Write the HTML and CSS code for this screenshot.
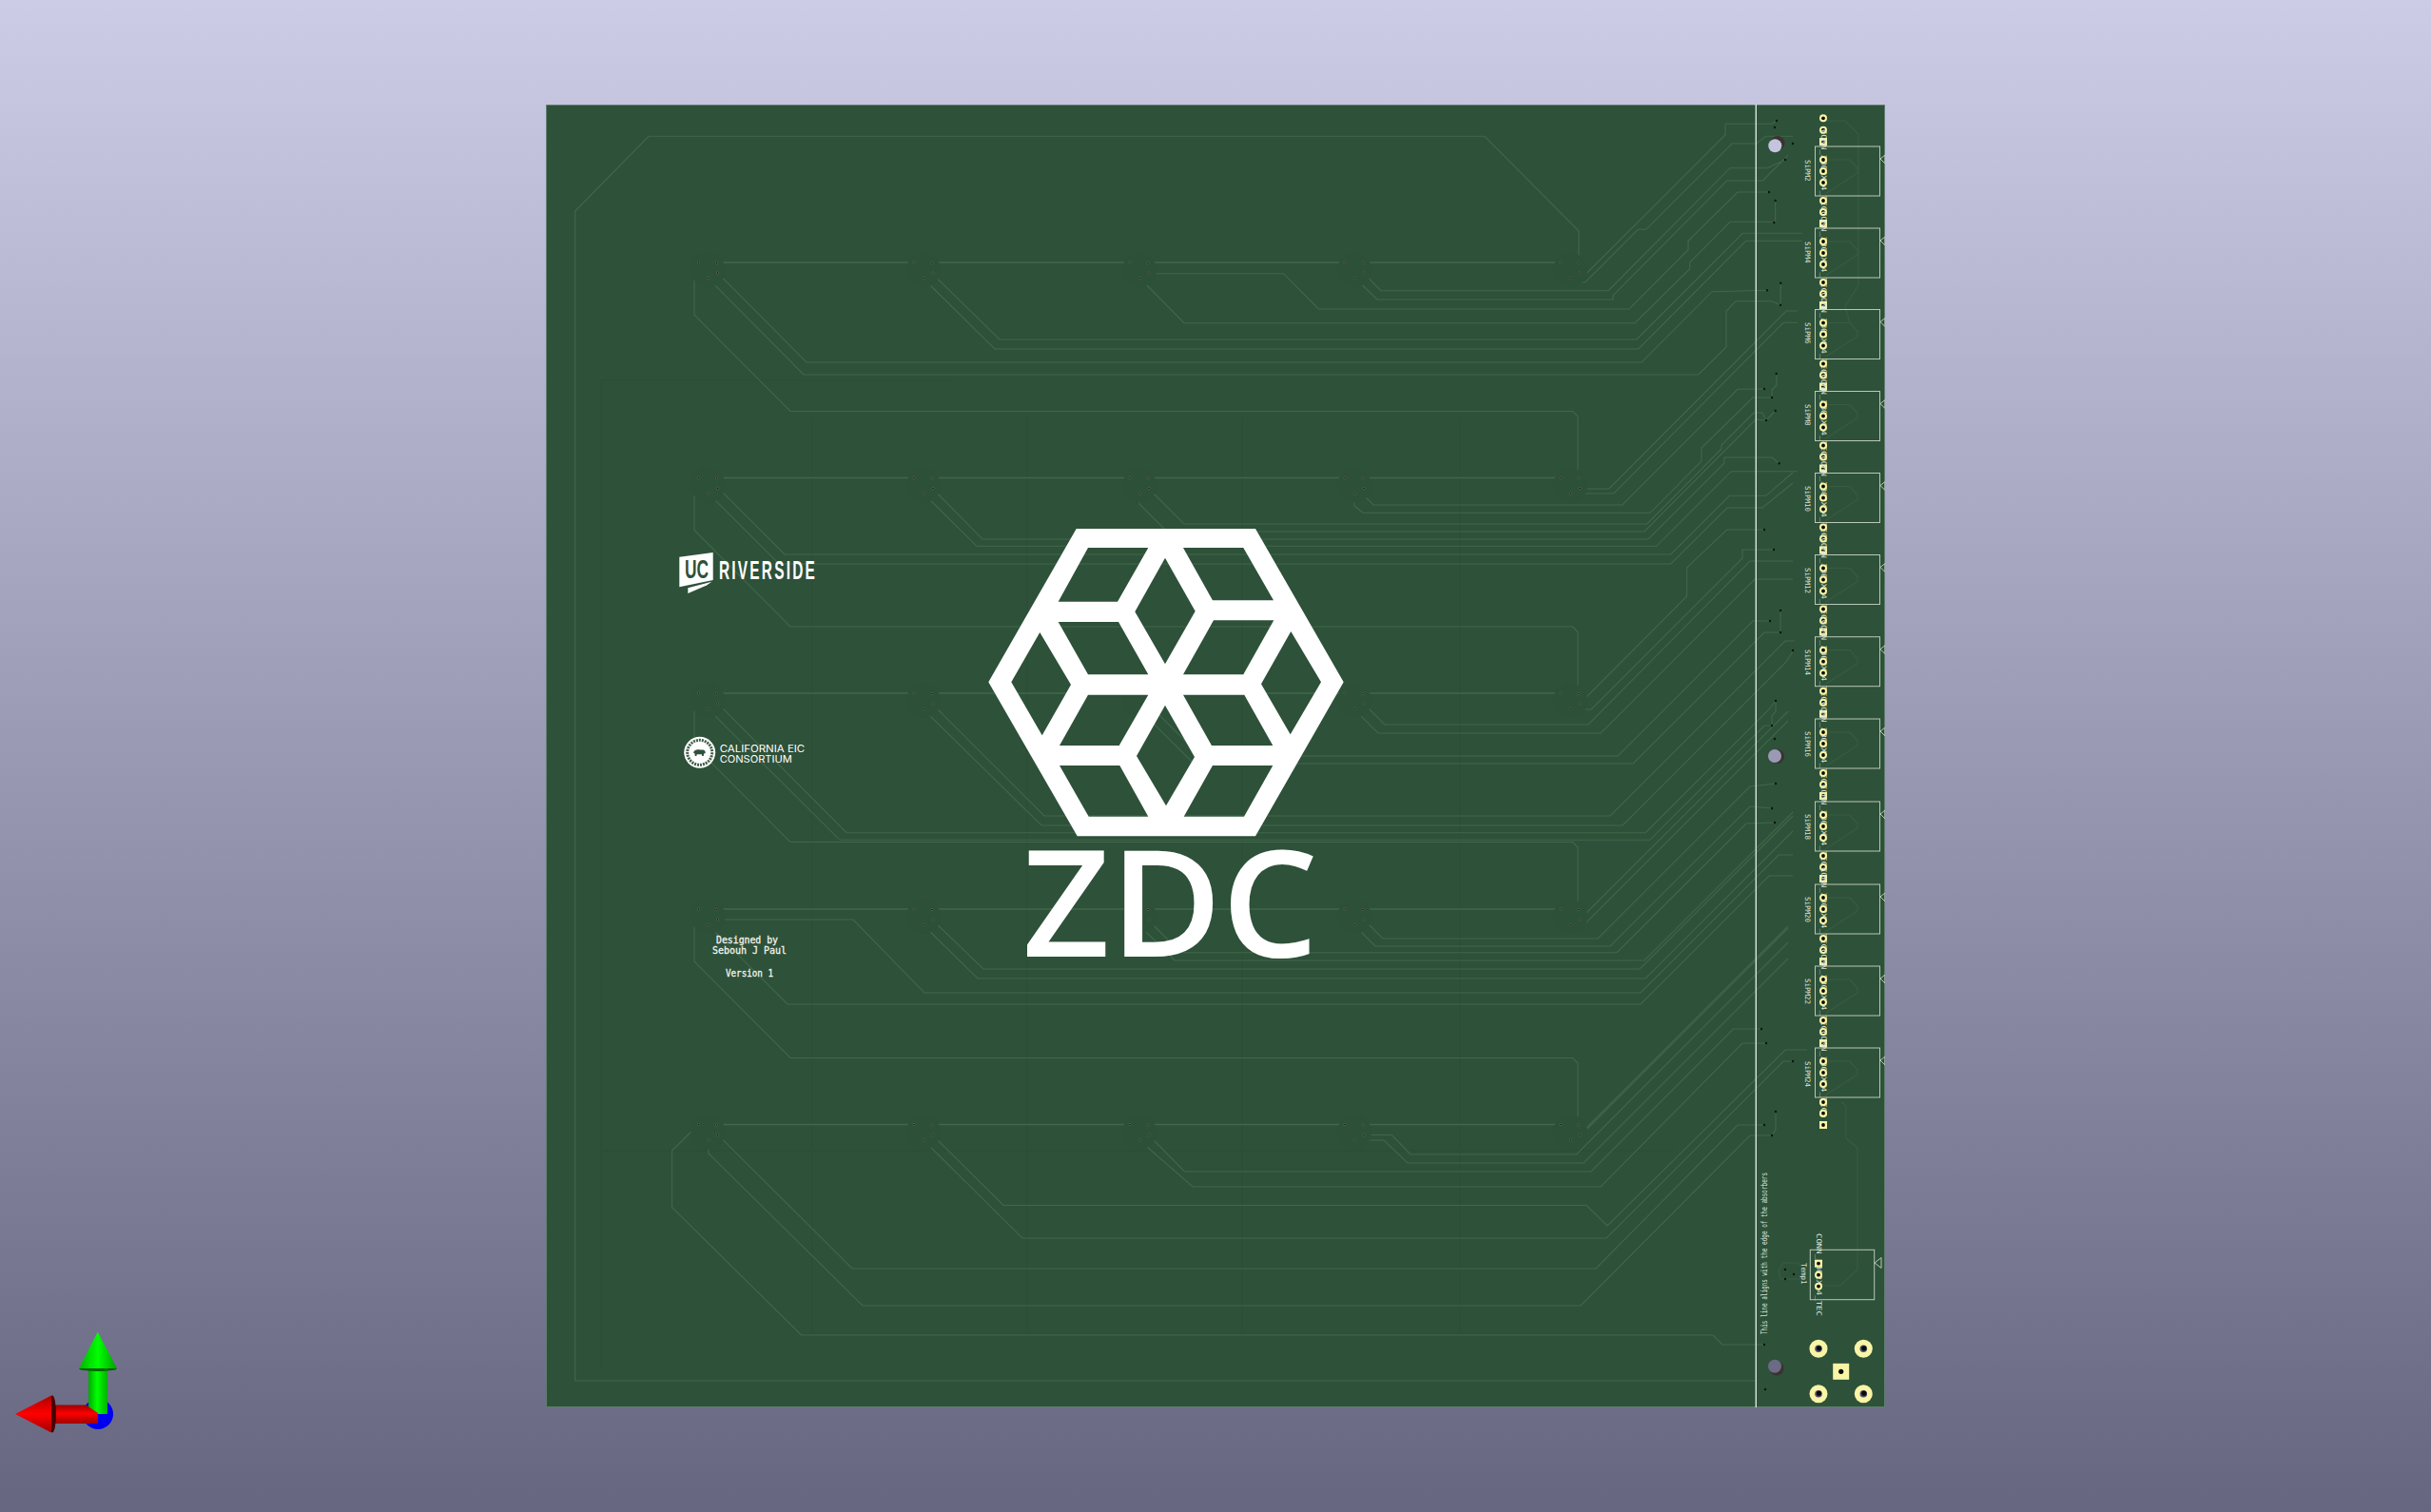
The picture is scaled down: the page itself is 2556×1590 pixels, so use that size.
FILE: index.html
```html
<!DOCTYPE html>
<html lang="en">

<head>
    <meta charset="UTF-8">
    <title>3D Viewer - ZDC board</title>
    <link rel="stylesheet" href="styles.css">
</head>

<body>
    <main class="viewer">

        <svg class="pcb" viewBox="574 110 1408 1370" width="1408" height="1370">
            <defs>
                <!-- one group of 4 vias, a row has 5 of them -->
                <g id="cluster">
                    <circle class="ghost" cx="10" cy="8" r="18"/>
                    <circle class="via" cx="0" cy="0" r="1.1"/>
                    <circle class="via" cx="19" cy="0.5" r="1.1"/>
                    <circle class="via" cx="20" cy="11" r="1.1"/>
                    <circle class="via" cx="10.5" cy="16.5" r="1.1"/>
                </g>
                <g id="row">
                    <path class="trace wide" d="M753.5 0H961M980 0H1188M1207 0H1414M1433 0H1641"/>
                </g>
                <!-- from the first via of a row over to the end of the next row -->
                <polyline id="rowlink" class="trace" points="734.5,0 730,5 730,55 831,156.5 1653.5,156.5 1659,162 1659,226.5"/>
                <g id="vias">
                    <use href="#cluster" x="734.5"/>
                    <use href="#cluster" x="961"/>
                    <use href="#cluster" x="1188"/>
                    <use href="#cluster" x="1414"/>
                    <use href="#cluster" x="1641"/>
                </g>

                <g id="sipm">
                    <polyline class="back" points="1919,14 1945,14 1953,23 1953,28 1919,50"/>
                    <rect class="outline" x="1908.5" y="0" width="68" height="52"/>
                    <polygon class="outline" points="1977,13 1982,9 1982,18"/>
                    <text class="ref" transform="translate(1914.5 -18) rotate(90)" textLength="86" lengthAdjust="spacingAndGlyphs">CONN_3B02X-4_TEC</text>
                    <use href="#pad" y="14"/>
                    <use href="#pad" y="26"/>
                    <use href="#pad" y="38"/>
                    <use href="#pad" y="57"/>
                    <use href="#pad" y="69"/>
                    <use href="#padsq" y="81"/>
                </g>
                <g id="pad">
                    <circle class="copper" cx="1917" cy="0" r="4"/>
                    <circle class="drill" cx="1917" cy="0" r="1.9"/>
                </g>
                <g id="padsq">
                    <rect class="copper" x="1913" y="-4" width="8" height="8"/>
                    <circle class="drill" cx="1917" cy="0" r="1.9"/>
                </g>
                <g id="bigpad">
                    <circle class="copper" r="9.5"/>
                    <circle class="bighole" r="3.8"/>
                    <circle class="drill" cx="0.5" cy="-0.5" r="2.6"/>
                </g>
            </defs>

            <rect class="board" x="574" y="110" width="1408" height="1370"/>

            <!-- faint stuff from the other side of the board -->
            <path class="under" d="M632 400V1440M632 400H1000M854 440V1400M1080 440V1400M1306 440V1400M1535 440V1400M632 1210H1760"/>
            <polyline class="back" points="1917,127 1940,127 1954,141 1954,300 1940,322 1945,340"/>
            <polyline class="back" points="1936,1159 1941,1163 1941,1197 1953,1207 1953,1335 1935,1352 1913,1352"/>
            <polyline class="back" points="1875,1328 1890,1328 1895,1332 1895,1345 1872,1345 1870,1336 1875,1328"/>

            <!-- rows of tracks between the vias -->
            <use href="#row" y="276"/>
            <use href="#row" y="502.5"/>
            <use href="#row" y="729"/>
            <use href="#row" y="956"/>
            <use href="#row" y="1182.5"/>
            <use href="#rowlink" y="276"/>
            <use href="#rowlink" y="502.5"/>
            <use href="#rowlink" y="729"/>
            <use href="#rowlink" y="956"/>

            <!-- outer track -->
            <polyline class="trace" points="1846.5,1452 604.7,1452 604.7,222 682,143.3 1561,143.3 1660,243 1660,276"/>

            <!-- row 1 -->
            <polyline class="trace" points="1660.4,288 1667.7,288 1814,141.7 1814,130.3 1863,130.3 1868,127"/>
            <polyline class="trace" points="1651,293 1655,297 1666.7,297 1722.3,241.3 1730.7,241.3 1821,151 1846.7,151 1856.7,143.3 1885,143.3"/>
            <polyline class="trace" points="1434,287.7 1452,305.7 1691,305.7 1819,176.7 1858.3,176.7 1877,168"/>
            <polyline class="trace" points="1425,292.5 1448,315 1696,315 1696,310.7 1815.7,190 1853.3,190 1880,163.3"/>
            <polyline class="trace" points="1207.8,287.7 1349.6,287.7 1386.4,325 1713,325 1775,262.7 1775,253.3 1827,202 1860,202"/>
            <polyline class="trace" points="1198,292 1245,339.7 1719,339.7 1776.7,282.7 1776.7,276 1819,233.3 1865,233.3 1866.7,233 1866.7,210.7"/>
            <polyline class="trace" points="980,287.7 1051,357 1720.7,357 1832.3,245.3 1895,245.3"/>
            <polyline class="trace" points="971,293 1046,367 1722.7,367 1835.7,253.3 1895,253.3"/>
            <polyline class="trace" points="754.5,287 848,381 1726,381 1800,306.7 1858,305.3"/>
            <polyline class="trace" points="745,293 845,394 1785.7,394 1815,365 1815,327.3 1825,316.7 1863,316.7 1872,320.7 1872.3,297.7"/>

            <!-- row 2 -->
            <polyline class="trace" points="1660.3,514 1691.7,514 1878,327 1890,327"/>
            <polyline class="trace" points="1651,519 1696.7,519 1875,339.3 1890,339.3"/>
            <polyline class="trace" points="1434,513 1434,521 1444,531 1705.7,531 1827,409.3 1855,409"/>
            <polyline class="trace" points="1424,519 1424,532 1433,539.3 1735,539.3 1789,485 1789,471 1843,418 1863,418 1863,410 1868,405 1867.7,393"/>
            <polyline class="trace" points="1207,513 1245,551 1731.7,551 1810,472 1810,468 1844,434 1853,434 1857,442 1866.7,432"/>
            <polyline class="trace" points="1198,519 1198,530 1227,559 1729,559 1846,441 1857,442"/>
            <polyline class="trace" points="980,513 1033,567 1733,567 1813,487 1813,481 1863,481 1870.7,487.3"/>
            <polyline class="trace" points="971,519 1027,574.3 1741.7,574.3 1820.3,495.7 1890,495.7"/>
            <polyline class="trace" points="755,513 825,583 1756.7,583 1818.3,521.3 1856.7,521.3 1885,497"/>
            <polyline class="trace" points="745,519 819,593 1756.7,593 1816,534 1853,534 1885,508"/>

            <!-- row 3 -->
            <polyline class="trace" points="1661,740 1773.6,627 1773.6,597 1815.7,557 1855,557"/>
            <polyline class="trace" points="1651,746 1673,746 1832,587 1832,578 1865,578"/>
            <polyline class="trace" points="1434,740 1456,762 1670,762 1840,590 1885,590"/>
            <polyline class="trace" points="1424,746 1449,771 1683,771 1845,609 1885,609"/>
            <polyline class="trace" points="1207,740 1262,795 1701,795 1843,653 1861,653"/>
            <polyline class="trace" points="1198,746 1255,803 1717,803 1855,665 1872,665 1872,642"/>
            <polyline class="trace" points="980,740 1098,858 1693,858 1877,674 1887,674"/>
            <polyline class="trace" points="971,746 1095,868 1706,868 1878,696 1885,685"/>
            <polyline class="trace" points="755,740 890,875.7 1730,875.7 1860,746 1867,737"/>
            <polyline class="trace" points="745,746 883,883.3 1734.6,883.3 1855,763 1863,763 1863,753 1867,748 1867,737"/>

            <!-- row 4 -->
            <polyline class="trace" points="1661,967 1880,748"/>
            <polyline class="trace" points="1651,973 1665,973 1880,758"/>
            <polyline class="trace" points="1434,967 1454,987 1680,987 1840,827 1867,824"/>
            <polyline class="trace" points="1424,973 1446,995 1693,995 1840,848 1863,850"/>
            <polyline class="trace" points="1207,967 1241,1001.7 1700,1001.7 1836,866 1866,865"/>
            <polyline class="trace" points="1198,973 1235,1010 1729,1010 1885,854"/>
            <polyline class="trace" points="980,967 1034,1019 1724,1019 1885,858"/>
            <polyline class="trace" points="971,973 1028,1029 1730,1029 1885,874"/>
            <polyline class="trace" points="755,967 897,967 972,1044 1725,1044 1870,899 1885,899"/>
            <polyline class="trace" points="745,973 828,1056 1725,1056 1860,921 1885,921"/>

            <!-- row 5 -->
            <polyline class="trace" points="734.5,1182.5 706.6,1210 706.6,1269.7 842.6,1404 1801,1404 1811,1414 1855,1414"/>
            <polyline class="trace" points="745,1199 745,1213 907,1373 1662,1373 1840,1194 1863,1194 1867,1188 1867,1169"/>
            <polyline class="trace" points="755,1193.5 896,1334 1678,1334 1827,1183 1855,1183"/>
            <polyline class="trace" points="980.5,1193.5 1055,1267.5 1668,1267.5 1690,1289 1877,1104 1900,1104"/>
            <polyline class="trace" points="971,1199 1075,1302 1689,1302 1875,1116 1885,1116"/>
            <polyline class="trace" points="1207.5,1193.5 1245.5,1232 1673,1232 1822.5,1082 1852,1082"/>
            <polyline class="trace" points="1198,1199 1254,1248 1683,1248 1832,1097 1857,1097"/>
            <polyline class="trace" points="1434,1193.5 1463.5,1193.5 1483,1214 1657.5,1214 1880,991"/>
            <polyline class="trace" points="1425,1199 1455,1199 1480,1223 1665,1223 1880,1008"/>
            <polyline class="trace" points="1661,1193 1880,974"/>
            <polyline class="trace" points="1651,1199 1657,1199 1880,976"/>

            <!-- via dots go over the tracks -->
            <use href="#vias" y="276"/>
            <use href="#vias" y="502.5"/>
            <use href="#vias" y="729"/>
            <use href="#vias" y="956"/>
            <use href="#vias" y="1182.5"/>

            <!-- the single vias next to the connectors -->
            <path class="dots" d="M1868 127h.01M1866 134h.01M1885 151h.01M1877 168h.01M1860 202h.01M1866.7 211h.01M1865.300 234h.01M1872.300 297.700h.01M1858 305.300h.01M1872 320.700h.01M1867.700 393h.01M1855 409h.01M1863 418h.01M1866.700 432h.01M1857 442h.01M1870.700 487.300h.01M1855 557h.01M1865 578h.01M1861 653h.01M1872 642h.01M1872 665h.01M1885 684h.01M1867 737h.01M1863 763h.01M1866 777h.01M1867 824h.01M1863 850h.01M1866 865h.01M1852 1082h.01M1857 1097h.01M1885 1116h.01M1867 1169h.01M1855 1183h.01M1863 1194h.01M1855 1414h.01M1856 1461h.01M1877 1335h.01M1886 1340h.01M1877 1345h.01"/>

            <!-- logo -->
            <path class="logo" fill-rule="evenodd" d="M1131.7 556H1320L1412.7 717.3 1320 879.3H1132.7L1039.3 717.3Z
                M1144 576H1207.3L1175 632.7H1112.7Z
                M1244 576H1307.3L1339 631.3H1275Z
                M1225 586.7L1256.7 642.7 1225 698.3 1193.3 643.3Z
                M1093.3 665L1126 720 1095.7 773.3 1063.3 717.3Z
                M1357.3 664L1389 717.3 1356.7 772.3 1326 719.3Z
                M1112.7 654H1176L1207.3 709.3H1144Z
                M1276 652.3H1339.3L1307.3 709.3H1244Z
                M1144 730.7H1207.3L1176.7 784H1114Z
                M1244 730.7H1308.3L1338.3 784H1274Z
                M1225 741.7L1256 796 1226 847.3 1195 795Z
                M1114 805H1177.3L1207.3 858.7H1144.7Z
                M1275 805H1338.3L1308 858.7H1244.7Z"/>
            <text class="zdc" x="1075" y="1006" textLength="311" lengthAdjust="spacingAndGlyphs">ZDC</text>

            <!-- UC Riverside -->
            <polygon class="logo" points="714.3,585.7 749.7,581 749.7,610 714.3,617.3"/>
            <polygon class="logo" points="723.3,618.3 748.3,611.7 743,615.5 723.3,624"/>
            <text class="uc" x="720" y="607.5" textLength="25" lengthAdjust="spacingAndGlyphs">UC</text>
            <text class="riverside" x="756" y="609.4" textLength="103" lengthAdjust="spacingAndGlyphs">RIVERSIDE</text>

            <!-- California EIC seal -->
            <circle class="logo" cx="735.7" cy="791.3" r="16.5"/>
            <circle class="sealring" cx="735.7" cy="791.3" r="13"/>
            <path class="bear" d="M729 791.5c1-2.5 3-3.5 5.500-3.200 2.500.3 4.500-.3 6 .7 1 .7 1.500 2 1 3.200l-1.500.3-.2 2.500h-1.600l-.4-1.800h-5l-.5 1.800h-1.600l-.2-2.600z"/>
            <text class="eic" x="756.700" y="790.800" textLength="89.500" lengthAdjust="spacingAndGlyphs">CALIFORNIA EIC</text>
            <text class="eic" x="756.700" y="802.300" textLength="76" lengthAdjust="spacingAndGlyphs">CONSORTIUM</text>

            <!-- silkscreen notes -->
            <text class="silk" x="753" y="991.700" textLength="65" lengthAdjust="spacingAndGlyphs">Designed by</text>
            <text class="silk" x="749" y="1003" textLength="78" lengthAdjust="spacingAndGlyphs">Sebouh J Paul</text>
            <text class="silk" x="763" y="1026.700" textLength="50" lengthAdjust="spacingAndGlyphs">Version 1</text>

            <!-- line the absorbers are aligned to -->
            <line class="edge" x1="1846.300" y1="110" x2="1846.300" y2="1480"/>
            <text class="ref note" transform="translate(1858 1403) rotate(-90)" textLength="170" lengthAdjust="spacingAndGlyphs">This line aligns with the edge of the absorbers</text>

            <!-- connectors -->
            <use href="#pad" y="124.300"/>
            <use href="#pad" y="136.700"/>
            <use href="#padsq" y="149"/>
            <use href="#sipm" y="154"/>
            <use href="#sipm" y="240"/>
            <use href="#sipm" y="325.500"/>
            <use href="#sipm" y="411.500"/>
            <use href="#sipm" y="497.500"/>
            <use href="#sipm" y="583.500"/>
            <use href="#sipm" y="669.700"/>
            <use href="#sipm" y="756"/>
            <use href="#sipm" y="843"/>
            <use href="#sipm" y="930"/>
            <use href="#sipm" y="1016"/>
            <use href="#sipm" y="1102"/>

            <text class="ref" transform="translate(1898 168) rotate(90)">SiPM2</text>
            <text class="ref" transform="translate(1898 254) rotate(90)">SiPM4</text>
            <text class="ref" transform="translate(1898 339) rotate(90)">SiPM6</text>
            <text class="ref" transform="translate(1898 425) rotate(90)">SiPM8</text>
            <text class="ref" transform="translate(1898 511) rotate(90)">SiPM10</text>
            <text class="ref" transform="translate(1898 597) rotate(90)">SiPM12</text>
            <text class="ref" transform="translate(1898 683) rotate(90)">SiPM14</text>
            <text class="ref" transform="translate(1898 769) rotate(90)">SiPM16</text>
            <text class="ref" transform="translate(1898 856) rotate(90)">SiPM18</text>
            <text class="ref" transform="translate(1898 943) rotate(90)">SiPM20</text>
            <text class="ref" transform="translate(1898 1029) rotate(90)">SiPM22</text>
            <text class="ref" transform="translate(1898 1116) rotate(90)">SiPM24</text>

            <!-- temperature sensor -->
            <rect class="outline" x="1903.300" y="1314.300" width="67.400" height="52.400"/>
            <polygon class="outline" points="1971,1328 1978,1322.500 1978,1333.500"/>
            <text class="ref" transform="translate(1909.500 1297) rotate(90)" textLength="87" lengthAdjust="spacingAndGlyphs">CONN_3B02X-4_TEC</text>
            <text class="ref" transform="translate(1893.500 1328) rotate(90)">Temp1</text>
            <rect class="copper" x="1908" y="1324.700" width="8" height="8"/>
            <circle class="drill" cx="1912" cy="1328.700" r="1.900"/>
            <use href="#pad" x="-5" y="1340.700"/>
            <use href="#pad" x="-5" y="1352.700"/>

            <!-- last single pads -->
            <use href="#pad" y="1159"/>
            <use href="#pad" y="1170.700"/>
            <use href="#padsq" y="1183"/>

            <!-- mounting pads -->
            <use href="#bigpad" x="1912" y="1418.300"/>
            <use href="#bigpad" x="1959.300" y="1418.300"/>
            <use href="#bigpad" x="1912" y="1465.700"/>
            <use href="#bigpad" x="1959.300" y="1465.700"/>
            <rect class="copper" x="1927.200" y="1433.800" width="17" height="17"/>
            <circle class="drill" cx="1935.700" cy="1442.300" r="2.600"/>

            <!-- screw holes, you see the background through them -->
            <circle class="wall" cx="1869" cy="150.500" r="7.500"/>
            <circle class="hole hole-top" cx="1866.300" cy="153.300" r="7"/>
            <circle class="wall" cx="1868.500" cy="795.500" r="7.500"/>
            <circle class="hole hole-mid" cx="1866" cy="795" r="7"/>
            <circle class="wall" cx="1868" cy="1439" r="7.500"/>
            <circle class="hole hole-low" cx="1866" cy="1436.700" r="7"/>
        </svg>

        <svg class="axes" viewBox="0 0 150 150" width="150" height="150">
            <defs>
                <linearGradient id="greenshaft">
                    <stop offset="0" stop-color="#00a800"/>
                    <stop offset="0.45" stop-color="#00ff00"/>
                    <stop offset="1" stop-color="#00b000"/>
                </linearGradient>
                <linearGradient id="greencone">
                    <stop offset="0" stop-color="#00b400"/>
                    <stop offset="0.5" stop-color="#00ff00"/>
                    <stop offset="1" stop-color="#00a000"/>
                </linearGradient>
                <linearGradient id="redshaft" x1="0" y1="0" x2="0" y2="1">
                    <stop offset="0" stop-color="#9c0000"/>
                    <stop offset="0.45" stop-color="#ff0000"/>
                    <stop offset="1" stop-color="#a00000"/>
                </linearGradient>
                <linearGradient id="redcone" x1="0" y1="0" x2="0" y2="1">
                    <stop offset="0" stop-color="#b00000"/>
                    <stop offset="0.5" stop-color="#ff0000"/>
                    <stop offset="1" stop-color="#a00000"/>
                </linearGradient>
            </defs>
            <circle cx="103" cy="107" r="16" fill="#0000f0"/>
            <rect x="93" y="58" width="20" height="49" fill="url(#greenshaft)"/>
            <ellipse cx="103" cy="59" rx="20" ry="3" fill="#006000"/>
            <polygon points="102.700,20.700 83,59 123,59" fill="url(#greencone)"/>
            <polygon points="53,97.500 90.500,97.500 103,106 103,117 53,117" fill="url(#redshaft)"/>
            <ellipse cx="55" cy="107" rx="4" ry="19.500" fill="#4a0000"/>
            <polygon points="16,107 54,87.500 54,126.500" fill="url(#redcone)"/>
        </svg>

    </main>
</body>

</html>
```

FILE: styles.css
```css
html,
body {
    margin: 0;
    height: 1590px;
    overflow: hidden;
}

.viewer {
    position: relative;
    width: 2556px;
    height: 1590px;
    background: linear-gradient(#ccccE6, #666680);
}

.pcb {
    display: block;
    margin-left: 574px;
    padding-top: 110px;
}

.axes {
    position: absolute;
    left: 0;
    top: 1380px;
}

.board {
    fill: #2e5139;
    stroke: #5f7f72;
    stroke-width: 2;
}

.trace {
    fill: none;
    stroke: #41684b;
    stroke-width: 1.1;
}

.wide {
    stroke-width: 1.5;
}

.under {
    fill: none;
    stroke: #2d4e37;
    stroke-width: 2;
}

.back {
    fill: none;
    stroke: #385c42;
    stroke-width: 1.2;
}

.ghost {
    fill: #2d5038;
}

.via {
    fill: #10140e;
    stroke: #8d9470;
    stroke-width: 0.4;
}

.dots {
    fill: none;
    stroke: #10140e;
    stroke-width: 2.4;
    stroke-linecap: round;
}

.outline {
    fill: none;
    stroke: #b9c8bb;
    stroke-width: 1;
}

.copper {
    fill: #f9f5a6;
}

.drill {
    fill: #0b0b0b;
}

.bighole {
    fill: #50506a;
}

.edge {
    stroke: #dbe4dc;
    stroke-width: 1.4;
}

.wall {
    fill: #3a3230;
}

.hole-top {
    fill: #c4c4de;
}

.hole-mid {
    fill: #9a9ab6;
}

.hole-low {
    fill: #6b6b86;
}

.logo {
    fill: #ffffff;
}

.zdc {
    fill: #ffffff;
    font-family: "Open Sans", sans-serif;
    font-weight: 600;
    font-size: 155px;
}

.uc {
    fill: #2e5139;
    font-family: "Liberation Sans", sans-serif;
    font-weight: bold;
    font-size: 27px;
}

.riverside {
    fill: #ffffff;
    font-family: "Liberation Sans", sans-serif;
    font-weight: bold;
    font-size: 28px;
    letter-spacing: 4px;
}

.sealring {
    fill: #ffffff;
    stroke: #3f5f47;
    stroke-width: 3;
    stroke-dasharray: 2 1;
}

.bear {
    fill: #2e5139;
}

.eic {
    fill: #ffffff;
    font-family: "Inter", sans-serif;
    font-size: 10.3px;
}

.silk {
    fill: #f2f5f0;
    font-family: "DejaVu Sans Mono", monospace;
    font-size: 11px;
    stroke: #f2f5f0;
    stroke-width: 0.3;
}

.ref {
    fill: #dbe3da;
    font-family: "DejaVu Sans Mono", monospace;
    font-size: 7.5px;
}

.note {
    font-size: 8px;
}
```
